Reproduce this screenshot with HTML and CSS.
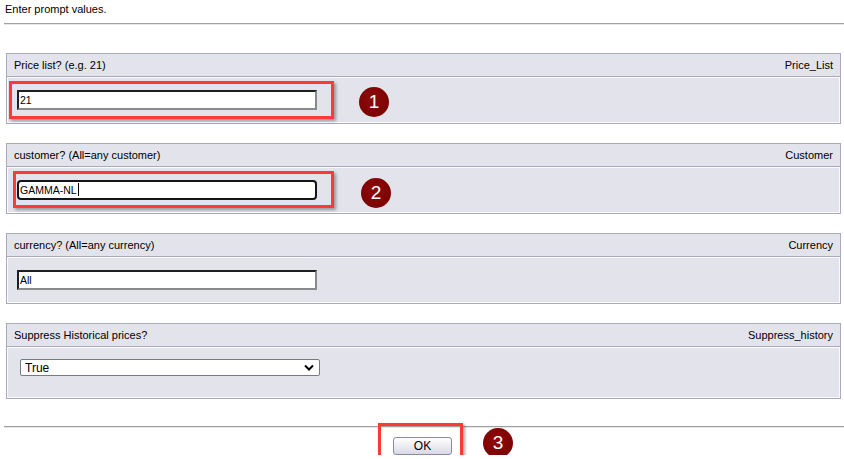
FILE: index.html
```html
<!DOCTYPE html>
<html lang="en">
<head>
    <meta charset="UTF-8">
    <title>Enter prompt values</title>
    <link rel="stylesheet" href="styles.css">
</head>
<body>

    <div class="intro">Enter prompt values.</div>
    <div class="rule"></div>

    <div class="prompts">
        <div class="panel">
            <div class="panel-head">
                <span>Price list? (e.g. 21)</span>
                <span>Price_List</span>
            </div>
            <div class="panel-body">
                <input type="text" class="field" value="21">
                <div class="mark mark-one"></div>
                <div class="step step-one">1</div>
            </div>
        </div>

        <div class="panel">
            <div class="panel-head">
                <span>customer? (All=any customer)</span>
                <span>Customer</span>
            </div>
            <div class="panel-body">
                <div class="field focused">GAMMA-NL<span class="caret"></span></div>
                <div class="mark mark-two"></div>
                <div class="step step-two">2</div>
            </div>
        </div>

        <div class="panel">
            <div class="panel-head">
                <span>currency? (All=any currency)</span>
                <span>Currency</span>
            </div>
            <div class="panel-body">
                <input type="text" class="field" value="All">
            </div>
        </div>

        <div class="panel">
            <div class="panel-head">
                <span>Suppress Historical prices?</span>
                <span>Suppress_history</span>
            </div>
            <div class="panel-body select-body">
                <div class="select-wrap">
                    <select class="choice">
                        <option>True</option>
                        <option>False</option>
                    </select>
                    <svg class="chevron" width="10" height="7" viewBox="0 0 10 7">
                        <path d="M1 1.5 L5 5.5 L9 1.5" fill="none" stroke="#000" stroke-width="2"/>
                    </svg>
                </div>
            </div>
        </div>
    </div>

    <div class="rule rule-bottom"></div>

    <div class="actions">
        <button class="ok">OK</button>
        <div class="mark mark-three"></div>
        <div class="step step-three">3</div>
    </div>

</body>
</html>
```

FILE: styles.css
```css
body {
    font-family: 'Liberation Sans', Arial, sans-serif;
    font-size: 11px;
    color: #000;
    background-color: #fff;
    margin: 0;
    padding: 0;
    overflow: hidden;
}

.intro {
    padding: 3px 5px 0;
    height: 17px;
}

.rule {
    margin-left: 4px;
    border-top: 1px solid #a0a0a0;
    border-bottom: 1px solid #e6e6e6;
    margin-top: 3px;
}

.prompts {
    padding: 28px 3px 0 6px;
}

.panel {
    background-color: #e3e3ec;
    border: 1px solid #a9a9bf;
    margin-bottom: 19px;
}

.panel-head {
    display: flex;
    justify-content: space-between;
    align-items: center;
    height: 22px;
    padding: 0 7px;
    border-bottom: 1px solid #a9a9bf;
}

.panel-body {
    position: relative;
    border: 1px solid #fbfbff;
    padding: 12px 9px;
    height: 20px;
}

.field {
    display: block;
    box-sizing: border-box;
    width: 300px;
    height: 20px;
    margin: 0;
    padding: 0 1px;
    font-family: 'Liberation Sans', Arial, sans-serif;
    font-size: 10.5px;
    line-height: 16px;
    background-color: #fff;
    border: 2px solid;
    border-color: #1e1e1e #8a8a8a #8a8a8a #1e1e1e;
    outline: none;
}

.field.focused {
    border: 2px solid #151515;
    border-radius: 4px;
}

.caret {
    display: inline-block;
    width: 1px;
    height: 13px;
    margin-left: 1px;
    background-color: #000;
    vertical-align: -2px;
}

.select-body {
    padding: 11px 12px 21px;
    height: 17px;
}

.select-wrap {
    position: relative;
    width: 300px;
}

.choice {
    appearance: none;
    -webkit-appearance: none;
    display: block;
    box-sizing: border-box;
    width: 300px;
    height: 17px;
    margin: 0;
    padding: 0 4px;
    font-family: 'Liberation Sans', Arial, sans-serif;
    font-size: 12px;
    background-color: #fff;
    border: 1px solid #7a7a7a;
    border-radius: 2px;
}

.chevron {
    position: absolute;
    right: 6px;
    top: 5px;
}

.rule-bottom {
    margin-top: 27px;
}

.actions {
    position: relative;
    display: flex;
    justify-content: center;
    padding-top: 9px;
}

.ok {
    width: 59px;
    height: 18px;
    margin-left: 1px;
    font-family: 'Liberation Sans', Arial, sans-serif;
    font-size: 12px;
    background: linear-gradient(#ffffff, #d9d9e6);
    border: 1px solid #8a8aa6;
    border-radius: 3px;
    padding: 0;
}

.mark {
    position: absolute;
    border: 3px solid #ff3838;
    box-shadow: 2px 2px 3px rgba(0, 0, 0, 0.35);
    box-sizing: border-box;
}

.mark-one {
    left: 1px;
    top: 3px;
    width: 325px;
    height: 38px;
}

.mark-two {
    left: 5px;
    top: 3px;
    width: 321px;
    height: 37px;
}

.mark-three {
    left: 378px;
    top: -5px;
    width: 85px;
    height: 37px;
}

.step {
    position: absolute;
    width: 30px;
    height: 30px;
    border-radius: 50%;
    background: radial-gradient(circle at 45% 40%, #8e0a0a, #740000);
    color: #fff;
    font-family: 'Liberation Sans', Arial, sans-serif;
    font-size: 19px;
    line-height: 30px;
    text-align: center;
}

.step-one {
    left: 351px;
    top: 9px;
}

.step-two {
    left: 353px;
    top: 10px;
}

.step-three {
    left: 483px;
    top: 0;
}
```
